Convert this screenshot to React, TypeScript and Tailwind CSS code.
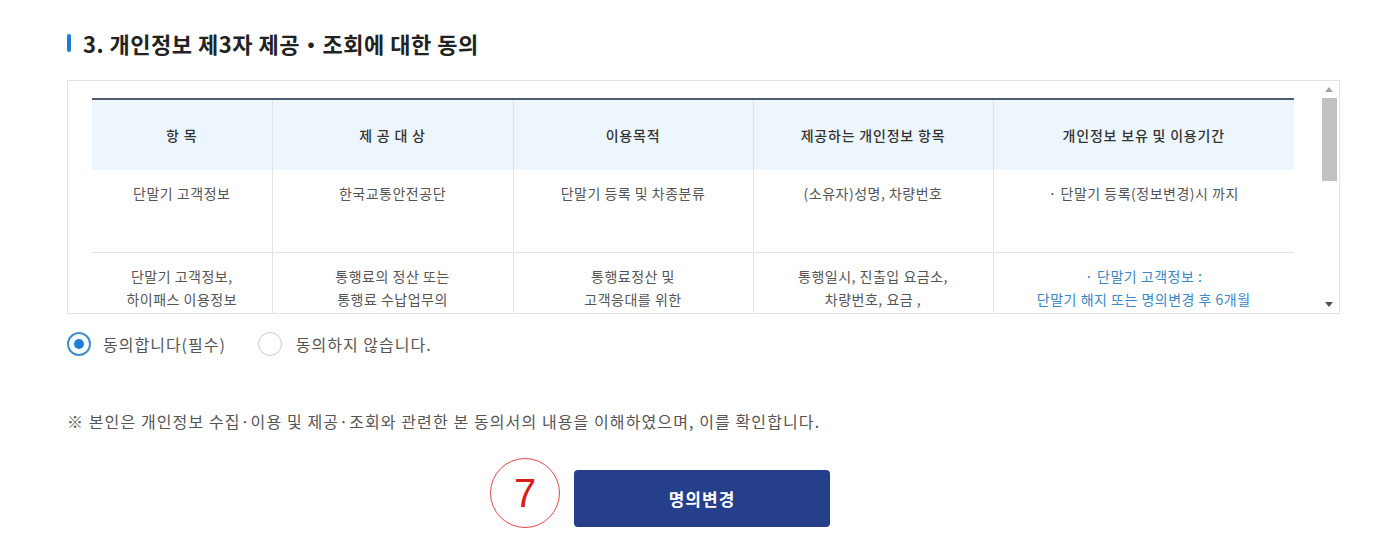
import React from "react";

const font = { fontFamily: '"Noto Sans CJK KR", "Noto Sans", sans-serif' };

const headers = ["항 목", "제 공 대 상", "이용목적", "제공하는 개인정보 항목", "개인정보 보유 및 이용기간"];
const widths = ["w-[180px]", "w-[241px]", "w-[240px]", "w-[240px]", "w-[301px]"];

export default function App() {
  return (
    <div className="w-[1394px] h-[551px] bg-white overflow-hidden text-[#555]" style={font}>
      <div className="ml-[67px] w-[1273px]">
        {/* Title */}
        <div className="flex items-center gap-[12px] pt-[24px] h-[61px]">
          <div className="w-[4px] h-[18px] bg-[#1a7fd0] rounded-[2px]" />
          <h2 className="text-[22px] font-bold text-[#222] tracking-[0.5px] leading-[28px]">
            3. 개인정보 제3자 제공・조회에 대한 동의
          </h2>
        </div>

        {/* Scroll box */}
        <div className="mt-[19px] h-[234px] border border-[#e2e2e2] flex">
          <div className="flex-1 overflow-hidden pl-[24px] pt-[17px]">
            <table className="w-[1202px] border-collapse table-fixed border-t-2 border-[#4e5b73] text-[14px] tracking-[0.5px]">
              <thead>
                <tr className="h-[71px] bg-[#edf6fc]">
                  {headers.map((h, i) => (
                    <th
                      key={h}
                      className={`${widths[i]} font-medium text-[#333] text-center align-middle tracking-[0.8px] ${i < 4 ? "border-r border-[#e3e3e3]" : ""}`}
                    >
                      {h}
                    </th>
                  ))}
                </tr>
              </thead>
              <tbody className="leading-[23px]">
                <tr className="h-[82px] border-b border-[#e3e3e3]">
                  <td className="text-center align-top pt-[12px] border-r border-[#e3e3e3]">단말기 고객정보</td>
                  <td className="text-center align-top pt-[12px] border-r border-[#e3e3e3]">한국교통안전공단</td>
                  <td className="text-center align-top pt-[12px] border-r border-[#e3e3e3]">단말기 등록 및 차종분류</td>
                  <td className="text-center align-top pt-[12px] border-r border-[#e3e3e3]">(소유자)성명, 차량번호</td>
                  <td className="text-center align-top pt-[12px]">· 단말기 등록(정보변경)시 까지</td>
                </tr>
                <tr className="h-[82px]">
                  <td className="text-center align-top pt-[12px] border-r border-[#e3e3e3]">
                    단말기 고객정보,
                    <br />
                    하이패스 이용정보
                  </td>
                  <td className="text-center align-top pt-[12px] border-r border-[#e3e3e3]">
                    통행료의 정산 또는
                    <br />
                    통행료 수납업무의
                  </td>
                  <td className="text-center align-top pt-[12px] border-r border-[#e3e3e3]">
                    통행료정산 및
                    <br />
                    고객응대를 위한
                  </td>
                  <td className="text-center align-top pt-[12px] border-r border-[#e3e3e3]">
                    통행일시, 진출입 요금소,
                    <br />
                    차량번호, 요금 ,
                  </td>
                  <td className="text-center align-top pt-[12px] text-[#3b87c6]">
                    · 단말기 고객정보 :
                    <br />
                    단말기 해지 또는 명의변경 후 6개월
                  </td>
                </tr>
              </tbody>
            </table>
          </div>
          {/* Scrollbar */}
          <div className="w-[18px] mr-[1px] flex flex-col items-center bg-white">
            <div className="h-[17px] flex items-center justify-center">
              <svg width="8" height="5" viewBox="0 0 8 5">
                <path d="M0 5 L4 0 L8 5 Z" fill="#a3a3a3" />
              </svg>
            </div>
            <div className="w-[15px] h-[83px] bg-[#c1c1c1]" />
            <div className="flex-1" />
            <div className="h-[17px] flex items-center justify-center">
              <svg width="8" height="5" viewBox="0 0 8 5">
                <path d="M0 0 L8 0 L4 5 Z" fill="#505050" />
              </svg>
            </div>
          </div>
        </div>

        {/* Radios */}
        <div className="flex items-center mt-[17px] h-[26px] text-[16px] tracking-[1px] text-[#555]">
          <div className="flex items-center">
            <span className="w-[24px] h-[24px] rounded-full border-2 border-[#3f8fcf] flex items-center justify-center">
              <span className="w-[10px] h-[10px] rounded-full bg-[#1a7fd8]" />
            </span>
            <span className="ml-[12px]">동의합니다(필수)</span>
          </div>
          <div className="flex items-center ml-[32px]">
            <span className="w-[24px] h-[24px] rounded-full border border-[#c8c8c8]" />
            <span className="ml-[14px]">동의하지 않습니다.</span>
          </div>
        </div>

        {/* Notice */}
        <p className="mt-[52px] text-[16px] text-[#555] leading-[24px] tracking-[1.1px]">
          ※ 본인은 개인정보 수집·이용 및 제공·조회와 관련한 본 동의서의 내용을 이해하였으며, 이를 확인합니다.
        </p>

        {/* Button */}
        <div className="mt-[37px] flex justify-center pr-[3px]">
          <div className="relative">
            <div className="absolute left-[-84px] top-[-12px] w-[70px] h-[70px] rounded-full border border-[#e04848] flex items-center justify-center">
              <span className="text-[40px] text-[#d91c1c] leading-none" style={{ fontFamily: '"Liberation Sans", Arial, sans-serif' }}>
                7
              </span>
            </div>
            <button className="w-[256px] h-[57px] bg-[#253f8a] rounded-[4px] text-white text-[17px] font-bold tracking-[1px]">
              명의변경
            </button>
          </div>
        </div>
      </div>
    </div>
  );
}
